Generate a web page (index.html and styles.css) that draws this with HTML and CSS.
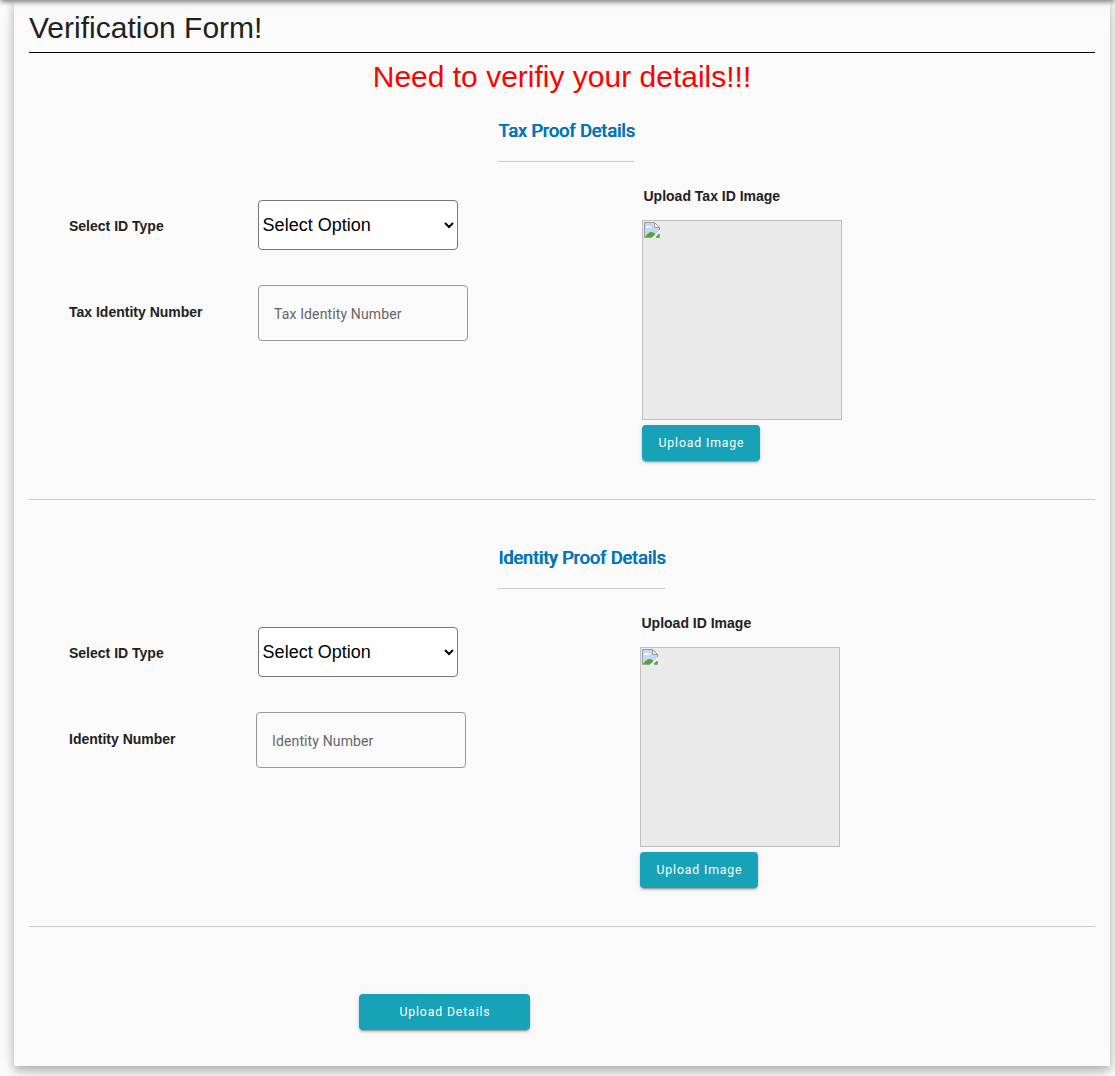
FILE: index.html
```
<!DOCTYPE html>
<html lang="en">
<head>
<meta charset="utf-8">
<title>Verification Form</title>
<link rel="stylesheet" href="styles.css">
</head>
<body>
<svg width="0" height="0" class="sprite" aria-hidden="true">
  <symbol id="missing" viewBox="0 0 16 16">
    <path d="M.5.5h10l5 5v10H.5z" fill="#c4d7f5"/>
    <path d="M2 6c0-2 2-3 3-1.500C7 3.500 8 5 8 6z" fill="#fff"/>
    <path d="M1 15c2-3 4-5 6.500-5 2 0 3 1 4 2l-3 3z" fill="#52a836"/>
    <path d="M8 16l4-4 1-1 3-3v3l-5 5z" fill="#f4f4f4"/>
    <path d="M11.500 15l3.500-3.500V15z" fill="#52a836"/>
    <path d="M10.500.5v5h5z" fill="#fff"/>
    <path d="M8 15.500H.5V.5h10l5 5V8M10.500.5v5h5M15.500 12v3.500H12" fill="none" stroke="#9b9b9b"/>
  </symbol>
</svg>
<div class="topbar"></div>
<main class="card">
  <h1 class="title">Verification Form!</h1>
  <p class="notice">Need to verifiy your details!!!</p>

  <section class="proof">
    <h2 class="proof-title">Tax Proof Details</h2>
    <div class="columns">
      <div class="fields">
        <div class="row row-select">
          <label class="label" for="tax-type">Select ID Type</label>
          <select class="select" id="tax-type"><option>Select Option</option></select>
        </div>
        <div class="row row-input">
          <label class="label" for="tax-number">Tax Identity Number</label>
          <input class="input" id="tax-number" placeholder="Tax Identity Number">
        </div>
      </div>
      <div class="upload">
        <div class="upload-label">Upload Tax ID Image</div>
        <div class="preview"><svg class="missing"><use href="#missing"/></svg></div>
        <button class="button">Upload Image</button>
      </div>
    </div>
  </section>

  <section class="proof proof-identity">
    <h2 class="proof-title">Identity Proof Details</h2>
    <div class="columns">
      <div class="fields">
        <div class="row row-select">
          <label class="label" for="id-type">Select ID Type</label>
          <select class="select" id="id-type"><option>Select Option</option></select>
        </div>
        <div class="row row-input">
          <label class="label" for="id-number">Identity Number</label>
          <input class="input" id="id-number" placeholder="Identity Number">
        </div>
      </div>
      <div class="upload">
        <div class="upload-label">Upload ID Image</div>
        <div class="preview"><svg class="missing"><use href="#missing"/></svg></div>
        <button class="button">Upload Image</button>
      </div>
    </div>
  </section>

  <button class="button submit">Upload Details</button>
</main>
</body>
</html>
```
FILE: styles.css
```
* { box-sizing: border-box; }

body {
  margin: 0;
  background: #fff;
  color: #212121;
  font-family: "Liberation Sans", Arial, sans-serif;
  font-size: 14px;
  overflow: hidden;
}

.sprite { display: block; }

/* The bar sits just above the viewport; only its shadow is seen. */
.topbar {
  position: fixed;
  top: -60px;
  left: 0;
  width: 100%;
  height: 60px;
  z-index: 2;
  box-shadow: 0 3px 5px -1px rgba(0, 0, 0, .3), 0 2px 4px rgba(0, 0, 0, .16), 0 1px 10px rgba(0, 0, 0, .14);
}

.card {
  height: 1066px;
  margin: 0 5px 10px 14px;
  padding: 0 15px;
  background: #fafafa;
  box-shadow: 0 4px 8px 0 rgba(0, 0, 0, .2), 0 6px 20px 0 rgba(0, 0, 0, .19);
}

.title {
  height: 53px;
  margin: 0;
  padding-top: 10px;
  border-bottom: 1px solid #000;
  font-size: 30px;
  font-weight: 400;
  line-height: 36px;
}

.notice {
  height: 54px;
  margin: 0;
  padding-top: 6px;
  color: #f00;
  font-size: 30px;
  line-height: 36px;
  text-align: center;
}

.proof {
  height: 393px;
  padding-top: 11px;
  border-bottom: 1px solid #ccc;
}

.proof-identity { margin-top: 34px; }

.proof-title {
  width: 136px;
  height: 44px;
  margin: 0 0 0 469px;
  border-bottom: 1px solid #ccc;
  color: #0275bb;
  font: 400 18px/25px Roboto, sans-serif;
  text-indent: .2px;
  text-shadow: .5px 0 0 #0275bb, .8px 0 0 #0275bb;
  white-space: nowrap;
}

.proof-identity .proof-title { width: 167px; }

.columns {
  display: grid;
  grid-template-columns: 573px 1fr;
  padding-left: 40px;
}

.proof-identity .columns { grid-template-columns: 571px 1fr; }

.fields {
  display: flex;
  flex-direction: column;
  gap: 35px;
  padding-top: 38px;
}

.row { display: flex; }

.label {
  width: 189px;
  padding-top: 18px;
  font-weight: 700;
  line-height: 16px;
}

.row-input .label { padding-top: 19px; }

.proof-identity .row-input .label { width: 187px; }

.select {
  width: 200px;
  height: 50px;
  padding: 0;
  border: 1px solid #767676;
  border-radius: 4px;
  background: #fff;
  color: #000;
  font: 18px "Liberation Sans", Arial, sans-serif;
  text-indent: -.4px;
}

.input {
  width: 210px;
  height: 56px;
  padding: 2px 15px 0;
  border: 1px solid #979797;
  border-radius: 4px;
  background: transparent;
  font: 14px Roboto, sans-serif;
  letter-spacing: .13px;
}

.input::placeholder { color: #666; }

.upload {
  display: flex;
  flex-direction: column;
  align-items: flex-start;
}

.upload-label {
  height: 58px;
  padding: 26px 0 0 1.500px;
  font-weight: 700;
  line-height: 16px;
}

.preview {
  width: 200px;
  height: 200px;
  padding: 1px;
  border: 1px solid #c0c0c0;
  background: #eaeaea;
}

.missing {
  display: block;
  width: 16px;
  height: 16px;
}

.button {
  width: 118px;
  height: 36px;
  margin-top: 5px;
  padding: 0 0 0 1px;
  border: 0;
  border-radius: 4px;
  background: #17a2b8;
  color: #fff;
  box-shadow: 0 3px 1px -2px rgba(0, 0, 0, .2), 0 2px 2px rgba(0, 0, 0, .14), 0 1px 5px rgba(0, 0, 0, .12);
  font: 12.250px Roboto, sans-serif;
  letter-spacing: .875px;
}

.submit {
  display: block;
  width: 171px;
  margin: 67px 0 0 330px;
}
```
